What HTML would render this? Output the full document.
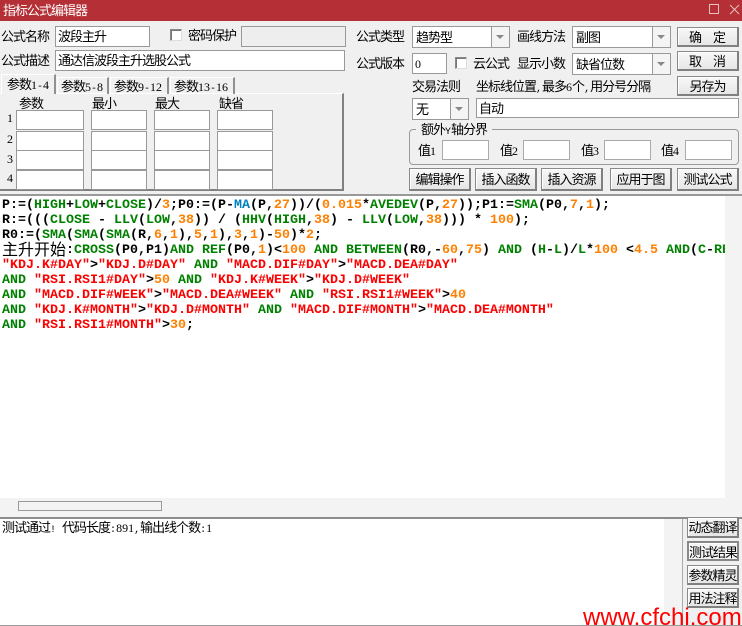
<!DOCTYPE html>
<html lang="zh"><head><meta charset="utf-8"><title>指标公式编辑器</title>
<style>
*{box-sizing:border-box}
html,body{margin:0;padding:0}
body{width:742px;height:626px;position:relative;overflow:hidden;background:#f0f0f0;color:#000;font-family:"WenQuanYi Zen Hei","Noto Sans CJK SC",sans-serif;font-size:13px;letter-spacing:-1px}
.a{position:absolute}
.t{position:absolute;white-space:nowrap;line-height:14px;height:14px}
.n{font-family:"Liberation Serif",serif;font-size:12px;letter-spacing:0}
.p{font-family:"Liberation Mono",monospace;font-size:10px;letter-spacing:0}
.i{position:absolute;background:#fff;border:1px solid #999;white-space:nowrap;line-height:18px;padding-left:2px;overflow:hidden}
.c{position:absolute;width:12px;height:12px;background:#fff;border:1px solid #888;border-right-color:#ddd;border-bottom-color:#ddd;box-shadow:inset 1px 1px #777}
.d{position:absolute;background:#fff;border:1px solid #999;line-height:19px;padding-left:3px;white-space:nowrap}
.d s{position:absolute;right:0;top:0;bottom:0;width:18px;border-left:1px solid #999;background:#f4f4f4}
.d s:after{content:"";position:absolute;left:4px;top:8px;border:4px solid transparent;border-top:4px solid #888;border-bottom:0}
.b{position:absolute;text-align:center;white-space:nowrap;background:linear-gradient(#f8f8f8,#e6e6e6);border:1px solid #8a8a8a;border-right:2px solid #808080;border-bottom:2px solid #808080;box-shadow:inset 1px 1px #fff;line-height:17px}
.tab{position:absolute;top:77px;height:17px;border-right:2px solid #909090;border-top:1px solid #fff;border-left:1px solid #fff;line-height:16px;padding-left:3px;white-space:nowrap}
#code{position:absolute;left:0;top:198px;width:725px;height:300px;background:#fff;overflow:hidden;font-family:"Liberation Mono",monospace;font-weight:bold;font-size:13.33px;letter-spacing:0;line-height:15px;padding:0 0 0 2px;white-space:pre}
#code div{height:15px}
#code i{font-style:normal}
.g{color:#008000}.o{color:#ff8000}.r{color:#f00}.l{color:#0080c0}
.h{font-family:"WenQuanYi Zen Hei","Noto Sans CJK SC",sans-serif;font-weight:normal;font-size:16px;line-height:0;position:relative;top:2px}
</style></head><body>
<div class="a" style="left:0;top:0;width:742px;height:21px;background:#b53036"></div>
<div class="t" style="left:3px;top:3px;color:#fff">指标公式编辑器</div>
<div class="a" style="left:709px;top:4px;width:10px;height:10px;border:1px solid #e8c0c0"></div>
<svg class="a" style="left:729px;top:4px" width="11" height="11"><path d="M1 1L10 10M10 1L1 10" stroke="#e8c0c0" fill="none"/></svg>

<div class="t" style="left:1px;top:29px">公式名称</div>
<div class="i" style="left:55px;top:26px;width:95px;height:21px">波段主升</div>
<div class="c" style="left:170px;top:29px"></div>
<div class="t" style="left:188px;top:28px">密码保护</div>
<div class="i" style="left:241px;top:26px;width:105px;height:21px;background:#eee"></div>
<div class="t" style="left:1px;top:53px">公式描述</div>
<div class="i" style="left:55px;top:50px;width:290px;height:21px">通达信波段主升选股公式</div>

<div class="a" style="left:0;top:93px;width:344px;height:98px;border-top:1px solid #fff;border-right:2px solid #808080;border-bottom:2px solid #808080"></div>
<div class="tab" style="left:1px;top:74px;width:55px;height:20px;background:#f0f0f0;padding-left:5px;line-height:18px">参数<span class="n">1</span><span class="p">-</span><span class="n">4</span></div>
<div class="tab" style="left:57px;width:52px">参数<span class="n">5</span><span class="p">-</span><span class="n">8</span></div>
<div class="tab" style="left:110px;width:59px">参数<span class="n">9</span><span class="p">-</span><span class="n">12</span></div>
<div class="tab" style="left:170px;width:65px">参数<span class="n">13</span><span class="p">-</span><span class="n">16</span></div>
<div class="t" style="left:19px;top:96px">参数</div>
<div class="t" style="left:92px;top:96px">最小</div>
<div class="t" style="left:155px;top:96px">最大</div>
<div class="t" style="left:219px;top:96px">缺省</div>
<div class="t n" style="left:7px;top:111px">1</div>
<div class="t n" style="left:7px;top:132px">2</div>
<div class="t n" style="left:7px;top:152px">3</div>
<div class="t n" style="left:7px;top:171px">4</div>
<div class="i" style="left:16px;top:110px;width:68px;height:20px"></div><div class="i" style="left:91px;top:110px;width:56px;height:20px"></div><div class="i" style="left:154px;top:110px;width:56px;height:20px"></div><div class="i" style="left:217px;top:110px;width:56px;height:20px"></div>
<div class="i" style="left:16px;top:131px;width:68px;height:20px"></div><div class="i" style="left:91px;top:131px;width:56px;height:20px"></div><div class="i" style="left:154px;top:131px;width:56px;height:20px"></div><div class="i" style="left:217px;top:131px;width:56px;height:20px"></div>
<div class="i" style="left:16px;top:150px;width:68px;height:20px"></div><div class="i" style="left:91px;top:150px;width:56px;height:20px"></div><div class="i" style="left:154px;top:150px;width:56px;height:20px"></div><div class="i" style="left:217px;top:150px;width:56px;height:20px"></div>
<div class="i" style="left:16px;top:170px;width:68px;height:20px"></div><div class="i" style="left:91px;top:170px;width:56px;height:20px"></div><div class="i" style="left:154px;top:170px;width:56px;height:20px"></div><div class="i" style="left:217px;top:170px;width:56px;height:20px"></div>

<div class="t" style="left:356px;top:29px">公式类型</div>
<div class="d" style="left:412px;top:26px;width:98px;height:22px">趋势型<s></s></div>
<div class="t" style="left:517px;top:29px">画线方法</div>
<div class="d" style="left:572px;top:26px;width:99px;height:22px">副图<s></s></div>
<div class="b" style="left:677px;top:27px;width:62px;height:20px;letter-spacing:11px;padding-left:11px">确定</div>
<div class="t" style="left:356px;top:56px">公式版本</div>
<div class="i" style="left:412px;top:53px;width:35px;height:21px"><span class="n">0</span></div>
<div class="c" style="left:455px;top:57px"></div>
<div class="t" style="left:473px;top:56px">云公式</div>
<div class="t" style="left:517px;top:56px">显示小数</div>
<div class="d" style="left:572px;top:53px;width:99px;height:22px">缺省位数<s></s></div>
<div class="b" style="left:677px;top:51px;width:62px;height:20px;letter-spacing:11px;padding-left:11px">取消</div>
<div class="t" style="left:412px;top:79px">交易法则</div>
<div class="t" style="left:476px;top:79px">坐标线位置<span class="p">,</span>最多<span class="n">6</span>个<span class="p">,</span>用分号分隔</div>
<div class="b" style="left:677px;top:76px;width:62px;height:20px">另存为</div>
<div class="d" style="left:412px;top:98px;width:57px;height:22px">无<s></s></div>
<div class="i" style="left:476px;top:98px;width:263px;height:20px">自动</div>

<div class="a" style="left:409px;top:129px;width:330px;height:36px;border:1px solid #999;border-radius:4px"></div>
<div class="t" style="left:416px;top:122px;background:#f0f0f0;padding:0 5px">额外<span class="p">Y</span>轴分界</div>
<div class="t" style="left:418px;top:143px">值<span class="n">1</span></div>
<div class="i" style="left:442px;top:140px;width:47px;height:20px;border-color:#aaa"></div>
<div class="t" style="left:500px;top:143px">值<span class="n">2</span></div>
<div class="i" style="left:523px;top:140px;width:47px;height:20px;border-color:#aaa"></div>
<div class="t" style="left:581px;top:143px">值<span class="n">3</span></div>
<div class="i" style="left:604px;top:140px;width:47px;height:20px;border-color:#aaa"></div>
<div class="t" style="left:661px;top:143px">值<span class="n">4</span></div>
<div class="i" style="left:685px;top:140px;width:47px;height:20px;border-color:#aaa"></div>

<div class="b" style="left:409px;top:168px;width:62px;height:23px;line-height:20px">编辑操作</div>
<div class="b" style="left:475px;top:168px;width:62px;height:23px;line-height:20px">插入函数</div>
<div class="b" style="left:541px;top:168px;width:62px;height:23px;line-height:20px">插入资源</div>
<div class="b" style="left:610px;top:168px;width:62px;height:23px;line-height:20px">应用于图</div>
<div class="b" style="left:677px;top:168px;width:62px;height:23px;line-height:20px">测试公式</div>

<div class="a" style="left:0;top:194px;width:742px;height:2px;background:#999"></div>
<div class="a" style="left:0;top:196px;width:725px;height:2px;background:#fff"></div>
<div class="a" style="left:725px;top:196px;width:17px;height:302px;background:#f3f3f3"></div>
<div id="code"><div>P:=(<i class="g">HIGH</i>+<i class="g">LOW</i>+<i class="g">CLOSE</i>)/<i class="o">3</i>;P0:=(P-<i class="l">MA</i>(P,<i class="o">27</i>))/(<i class="o">0.015</i>*<i class="g">AVEDEV</i>(P,<i class="o">27</i>));P1:=<i class="g">SMA</i>(P0,<i class="o">7</i>,<i class="o">1</i>);</div><div>R:=(((<i class="g">CLOSE</i> - <i class="g">LLV</i>(<i class="g">LOW</i>,<i class="o">38</i>)) / (<i class="g">HHV</i>(<i class="g">HIGH</i>,<i class="o">38</i>) - <i class="g">LLV</i>(<i class="g">LOW</i>,<i class="o">38</i>))) * <i class="o">100</i>);</div><div>R0:=(<i class="g">SMA</i>(<i class="g">SMA</i>(<i class="g">SMA</i>(R,<i class="o">6</i>,<i class="o">1</i>),<i class="o">5</i>,<i class="o">1</i>),<i class="o">3</i>,<i class="o">1</i>)-<i class="o">50</i>)*<i class="o">2</i>;</div><div><span class="h">主升开始</span>:<i class="g">CROSS</i>(P0,P1)<i class="g">AND</i> <i class="g">REF</i>(P0,<i class="o">1</i>)&lt;<i class="o">100</i> <i class="g">AND</i> <i class="g">BETWEEN</i>(R0,-<i class="o">60</i>,<i class="o">75</i>) <i class="g">AND</i> (<i class="g">H</i>-<i class="g">L</i>)/<i class="g">L</i>*<i class="o">100</i> &lt;<i class="o">4.5</i> <i class="g">AND</i>(<i class="g">C</i>-<i class="g">REF</i></div><div><i class="r">"KDJ.K#DAY"</i>&gt;<i class="r">"KDJ.D#DAY"</i> <i class="g">AND</i> <i class="r">"MACD.DIF#DAY"</i>&gt;<i class="r">"MACD.DEA#DAY"</i></div><div><i class="g">AND</i> <i class="r">"RSI.RSI1#DAY"</i>&gt;<i class="o">50</i> <i class="g">AND</i> <i class="r">"KDJ.K#WEEK"</i>&gt;<i class="r">"KDJ.D#WEEK"</i></div><div><i class="g">AND</i> <i class="r">"MACD.DIF#WEEK"</i>&gt;<i class="r">"MACD.DEA#WEEK"</i> <i class="g">AND</i> <i class="r">"RSI.RSI1#WEEK"</i>&gt;<i class="o">40</i></div><div><i class="g">AND</i> <i class="r">"KDJ.K#MONTH"</i>&gt;<i class="r">"KDJ.D#MONTH"</i> <i class="g">AND</i> <i class="r">"MACD.DIF#MONTH"</i>&gt;<i class="r">"MACD.DEA#MONTH"</i></div><div><i class="g">AND</i> <i class="r">"RSI.RSI1#MONTH"</i>&gt;<i class="o">30</i>;</div></div>

<div class="a" style="left:0;top:498px;width:742px;height:19px;background:#f3f3f3"></div>
<div class="a" style="left:18px;top:501px;width:144px;height:10px;border:1px solid #999"></div>
<div class="a" style="left:0;top:517px;width:742px;height:2px;background:#8c8c8c"></div>
<div class="a" style="left:0;top:519px;width:664px;height:106px;background:#fff"></div>
<div class="a" style="left:664px;top:519px;width:18px;height:106px;background:#f3f3f3"></div>
<div class="a" style="left:682px;top:519px;width:1px;height:106px;background:#aaa"></div>
<div class="t" style="left:2px;top:520px">测试通过<span class="p">! </span>代码长度<span class="p">:</span><span class="n">891</span><span class="p">,</span>输出线个数<span class="p">:</span><span class="n">1</span></div>
<div class="a" style="left:0;top:625px;width:742px;height:1px;background:#999"></div>

<div class="b" style="left:687px;top:517px;width:52px;height:21px">动态翻译</div>
<div class="b" style="left:687px;top:541px;width:52px;height:20px;border:2px solid #888;background:#f4f4f4">测试结果</div>
<div class="b" style="left:687px;top:565px;width:52px;height:20px">参数精灵</div>
<div class="b" style="left:687px;top:588px;width:52px;height:20px">用法注释</div>

<div class="a" style="left:583px;top:604px;width:159px;height:22px;overflow:hidden;color:#f00;font-family:'Liberation Sans',sans-serif;font-size:24px;letter-spacing:0;line-height:27px;white-space:nowrap">www.cfchi.com</div>
</body></html>
